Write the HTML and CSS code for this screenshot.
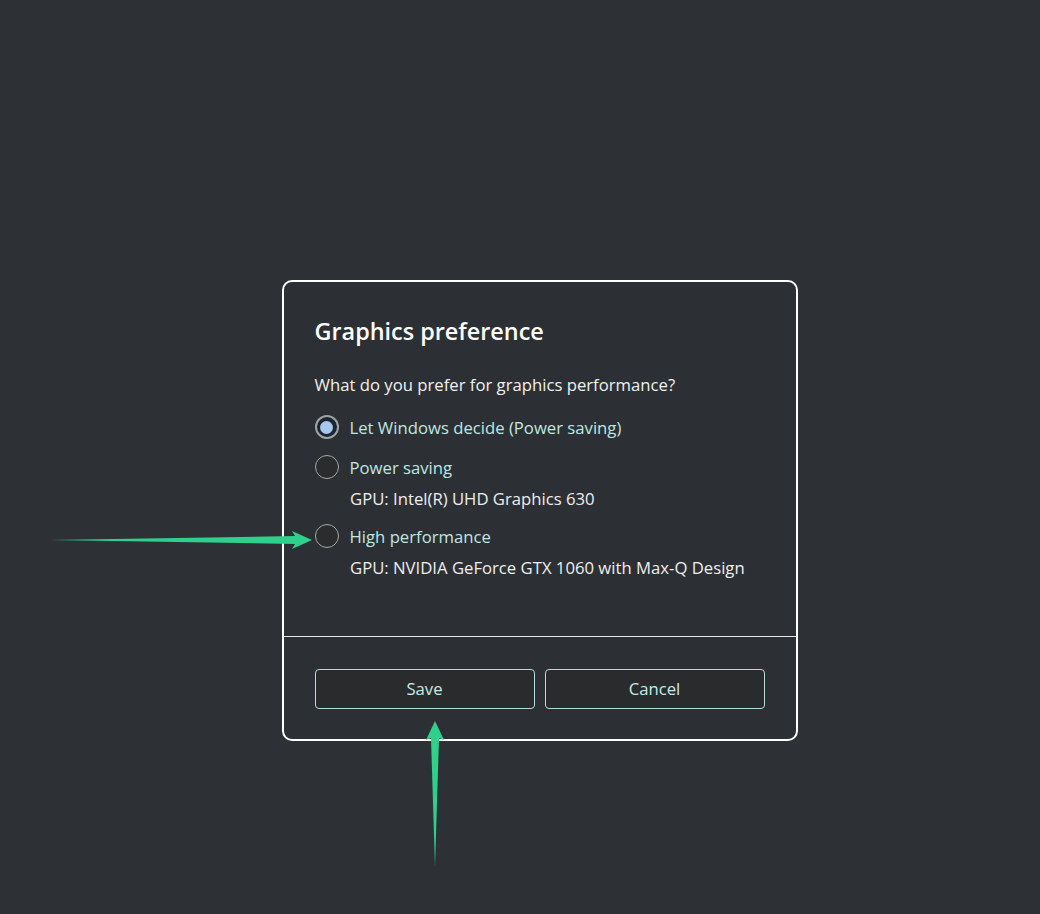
FILE: index.html
```html
<!DOCTYPE html>
<html lang="en">
<head>
<meta charset="utf-8">
<title>Graphics preference</title>
<link rel="stylesheet" href="styles.css">
</head>
<body>
<div class="stage">
  <div class="dialog">
    <div class="content">
      <h1 class="title">Graphics preference</h1>
      <p class="question">What do you prefer for graphics performance?</p>
      <div class="options">
        <div class="option">
          <span class="radio checked"><span class="dot"></span></span>
          <span class="label">Let Windows decide (Power saving)</span>
        </div>
        <div class="option">
          <span class="radio"></span>
          <span class="label">Power saving</span>
        </div>
        <div class="gpu">GPU: Intel(R) UHD Graphics 630</div>
        <div class="option spaced">
          <span class="radio"></span>
          <span class="label">High performance</span>
        </div>
        <div class="gpu">GPU: NVIDIA GeForce GTX 1060 with Max-Q Design</div>
      </div>
    </div>
    <div class="footer">
      <button class="btn">Save</button>
      <button class="btn">Cancel</button>
    </div>
  </div>
  <svg class="arrow arrow-left" width="270" height="20" viewBox="0 0 270 20">
    <polygon points="0,10 245,6 242,1 262,10 242,19 245,14" fill="#2fcf8c"/>
  </svg>
  <svg class="arrow arrow-up" width="20" height="146" viewBox="0 0 20 146">
    <polygon points="10,0 19,19 14,17 10,146 6,17 1,19" fill="#2fcf8c"/>
  </svg>
</div>
</body>
</html>
```
FILE: styles.css
```css
* { box-sizing: border-box; }
html, body {
  margin: 0;
  padding: 0;
  background: #2d3135;
}
body {
  width: 1040px;
  height: 914px;
  font-family: "Open Sans", "Noto Sans", sans-serif;
  color: #ececec;
  overflow: hidden;
}
.stage {
  position: relative;
  padding: 280px 0 0 282px;
}
.dialog {
  width: 516px;
  height: 461px;
  border: 2.5px solid #ffffff;
  border-radius: 10px;
  background: #2c3034;
  display: flex;
  flex-direction: column;
}
.content {
  flex: 1;
  padding: 33px 30px 0 30.5px;
}
.title {
  margin: 0;
  font-size: 23.4px;
  line-height: 32px;
  font-weight: 600;
  color: #ffffff;
}
.question {
  margin: 27px 0 0;
  font-size: 16.7px;
  line-height: 22px;
  color: #f0f0f0;
}
.options {
  margin-top: 11px;
  display: flex;
  flex-direction: column;
}
.option {
  display: flex;
  align-items: center;
  gap: 11px;
  height: 40px;
}
.option.spaced { margin-top: 5px; }
.label {
  font-size: 16.7px;
  color: #bfe6e0;
}
.gpu {
  padding-left: 35.5px;
  font-size: 16.7px;
  line-height: 24px;
  color: #eeeeee;
}
.radio {
  width: 24px;
  height: 24px;
  border-radius: 50%;
  border: 1.5px solid #a3aaa9;
  background: #2a2c2e;
  display: flex;
  align-items: center;
  justify-content: center;
  flex: none;
}
.radio.checked {
  border: 2px solid #9ea5a8;
  background: #1c2530;
}
.dot {
  width: 13px;
  height: 13px;
  border-radius: 50%;
  background: #a9c6ee;
}
.footer {
  border-top: 1px solid #e6e6e6;
  height: 103px;
  padding: 31.5px 30px 0 30.5px;
  display: flex;
  gap: 10px;
}
.btn {
  width: 220px;
  height: 40px;
  border: 1px solid #aee0d8;
  border-radius: 4px;
  background: #2a2b2c;
  color: #c6ebe5;
  font-family: "Open Sans", "Noto Sans", sans-serif;
  font-size: 16.7px;
}
.arrow { position: absolute; }
.arrow-left { left: 50px; top: 530px; }
.arrow-up { left: 425px; top: 721px; }
```
